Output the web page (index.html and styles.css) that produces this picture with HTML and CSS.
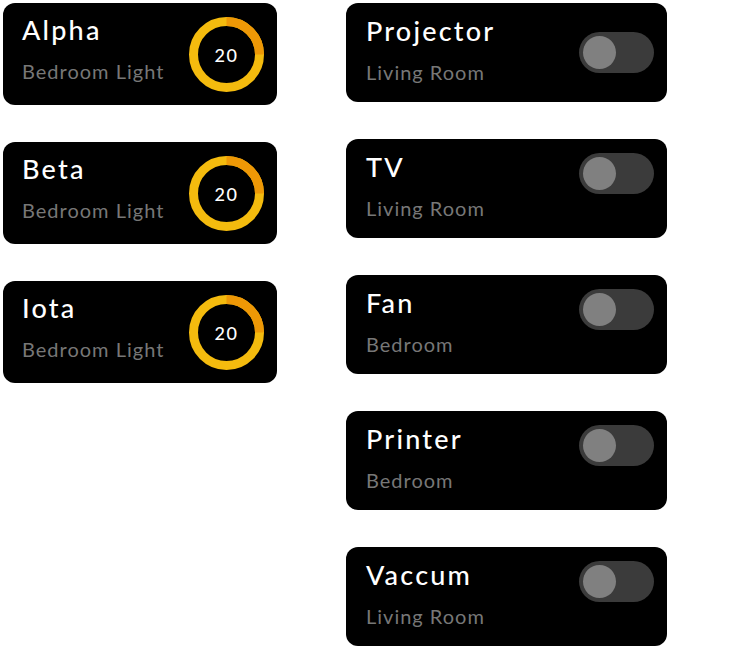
FILE: index.html
```html
<!DOCTYPE html>
<html lang="en">
<head>
  <meta charset="UTF-8" />
  <meta name="viewport" content="width=device-width, initial-scale=1.0" />
  <title>Devices</title>
  <link rel="stylesheet" href="styles.css">
</head>
<body>
  <div class="board">
    <div class="column lights">
      <div class="card light">
        <div class="info">
          <h2>Alpha</h2>
          <p>Bedroom Light</p>
        </div>
        <div class="dial">
          <svg viewBox="0 0 75 75" width="75" height="75">
            <circle class="ring" cx="37.5" cy="37.5" r="33" />
            <circle class="level" cx="37.5" cy="37.5" r="33" pathLength="100" stroke-dasharray="25 75" transform="rotate(-90 37.5 37.5)" />
          </svg>
          <span>20</span>
        </div>
      </div>
      <div class="card light">
        <div class="info">
          <h2>Beta</h2>
          <p>Bedroom Light</p>
        </div>
        <div class="dial">
          <svg viewBox="0 0 75 75" width="75" height="75">
            <circle class="ring" cx="37.5" cy="37.5" r="33" />
            <circle class="level" cx="37.5" cy="37.5" r="33" pathLength="100" stroke-dasharray="25 75" transform="rotate(-90 37.5 37.5)" />
          </svg>
          <span>20</span>
        </div>
      </div>
      <div class="card light">
        <div class="info">
          <h2>Iota</h2>
          <p>Bedroom Light</p>
        </div>
        <div class="dial">
          <svg viewBox="0 0 75 75" width="75" height="75">
            <circle class="ring" cx="37.5" cy="37.5" r="33" />
            <circle class="level" cx="37.5" cy="37.5" r="33" pathLength="100" stroke-dasharray="25 75" transform="rotate(-90 37.5 37.5)" />
          </svg>
          <span>20</span>
        </div>
      </div>
    </div>

    <div class="column switches">
      <div class="card device first">
        <div class="info">
          <h2>Projector</h2>
          <p>Living Room</p>
        </div>
        <div class="toggle"><span class="thumb"></span></div>
      </div>
      <div class="card device">
        <div class="info">
          <h2>TV</h2>
          <p>Living Room</p>
        </div>
        <div class="toggle"><span class="thumb"></span></div>
      </div>
      <div class="card device">
        <div class="info">
          <h2>Fan</h2>
          <p>Bedroom</p>
        </div>
        <div class="toggle"><span class="thumb"></span></div>
      </div>
      <div class="card device">
        <div class="info">
          <h2>Printer</h2>
          <p>Bedroom</p>
        </div>
        <div class="toggle"><span class="thumb"></span></div>
      </div>
      <div class="card device">
        <div class="info">
          <h2>Vaccum</h2>
          <p>Living Room</p>
        </div>
        <div class="toggle"><span class="thumb"></span></div>
      </div>
    </div>
  </div>
</body>
</html>
```

FILE: styles.css
```css
html, body {
  margin: 0;
  background: #fff;
  font-family: Lato, "Noto Sans", sans-serif;
}
.board {
  display: flex;
  gap: 69px;
  padding: 3px;
}
.column {
  display: flex;
  flex-direction: column;
}
.lights {
  width: 274px;
  gap: 37px;
}
.switches {
  width: 321px;
  gap: 37px;
}
.card {
  background: #000;
  color: #fff;
  border-radius: 12px;
  box-sizing: border-box;
  display: flex;
  justify-content: space-between;
  align-items: flex-start;
}
.light {
  height: 102px;
  padding: 0 13px 0 19px;
}
.device {
  height: 99px;
  padding: 0 13px 0 20px;
}
.info h2 {
  margin: 0;
  font-size: 27px;
  font-weight: 500;
  letter-spacing: 2.2px;
  line-height: 34px;
}
.info p {
  margin: 0;
  font-size: 20px;
  color: #777;
  letter-spacing: 1px;
  line-height: 24px;
}
.light .info {
  padding-top: 10px;
}
.light .info p {
  margin-top: 12px;
}
.device .info {
  padding-top: 11px;
}
.device .info p {
  margin-top: 12px;
}
.dial {
  position: relative;
  width: 75px;
  height: 75px;
  margin-top: 14px;
}
.dial svg {
  display: block;
}
.dial .ring, .dial .level {
  fill: none;
  stroke-width: 9;
}
.dial .ring {
  stroke: #f4bb0e;
}
.dial .level {
  stroke: #ee9806;
}
.dial span {
  position: absolute;
  inset: 0;
  display: flex;
  align-items: center;
  justify-content: center;
  font-size: 18px;
  font-weight: 500;
  letter-spacing: 1.5px;
}
.toggle {
  width: 75px;
  height: 41px;
  border-radius: 21px;
  background: #3b3b3b;
  margin-top: 14px;
  padding: 4px;
  box-sizing: border-box;
}
.first .toggle {
  margin-top: 29px;
}
.thumb {
  display: block;
  width: 33px;
  height: 33px;
  border-radius: 50%;
  background: #808080;
}
```
